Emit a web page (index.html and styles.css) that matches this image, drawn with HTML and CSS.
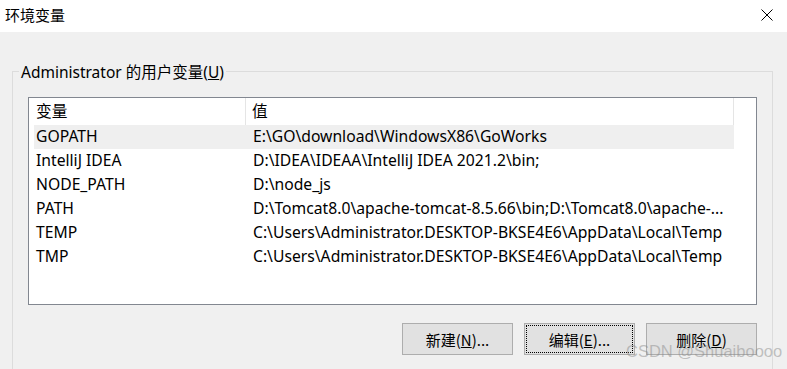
FILE: index.html
```html
<!DOCTYPE html>
<html lang="zh-CN">
<head>
  <meta charset="UTF-8" />
  <meta name="viewport" content="width=device-width, initial-scale=1" />
  <title>环境变量</title>
  <link rel="stylesheet" href="styles.css">
</head>
<body>
  <div class="dialog">
    <div class="titlebar">
      <span class="title">环境变量</span>
      <span class="close" aria-label="关闭">
        <svg width="12" height="12" viewBox="0 0 12 12"><path d="M0.5 0.5L11.5 11.5M11.5 0.5L0.5 11.5" stroke="#000" stroke-width="1" fill="none"/></svg>
      </span>
    </div>

    <div class="content">
      <fieldset class="group">
        <legend>Administrator 的用户变量(<u>U</u>)</legend>

        <div class="listbox">
          <div class="list-head">
            <div class="col-name">变量</div>
            <div class="col-value">值</div>
          </div>
          <div class="row selected">
            <div class="col-name">GOPATH</div>
            <div class="col-value">E:\GO\download\WindowsX86\GoWorks</div>
          </div>
          <div class="row">
            <div class="col-name">IntelliJ IDEA</div>
            <div class="col-value">D:\IDEA\IDEAA\IntelliJ IDEA 2021.2\bin;</div>
          </div>
          <div class="row">
            <div class="col-name">NODE_PATH</div>
            <div class="col-value">D:\node_js</div>
          </div>
          <div class="row">
            <div class="col-name">PATH</div>
            <div class="col-value">D:\Tomcat8.0\apache-tomcat-8.5.66\bin;D:\Tomcat8.0\apache-...</div>
          </div>
          <div class="row">
            <div class="col-name">TEMP</div>
            <div class="col-value">C:\Users\Administrator.DESKTOP-BKSE4E6\AppData\Local\Temp</div>
          </div>
          <div class="row">
            <div class="col-name">TMP</div>
            <div class="col-value">C:\Users\Administrator.DESKTOP-BKSE4E6\AppData\Local\Temp</div>
          </div>
        </div>

        <div class="buttons">
          <button>新建(<u>N</u>)...</button>
          <button class="focused">编辑(<u>E</u>)...</button>
          <button>删除(<u>D</u>)</button>
        </div>
      </fieldset>
    </div>

    <div class="watermark">CSDN @Shuaiboooo</div>
  </div>
</body>
</html>
```

FILE: styles.css
```css
* {
  box-sizing: border-box;
  margin: 0;
  padding: 0;
}
body {
  font-family: "Noto Sans", "Noto Sans CJK SC", sans-serif;
  font-size: 15.7px;
  color: #000;
  background: #f0f0f0;
  width: 787px;
  height: 369px;
  overflow: hidden;
}
.dialog {
  position: relative;
  height: 369px;
}
.titlebar {
  height: 32px;
  background: #fff;
  display: flex;
  align-items: center;
  justify-content: space-between;
  padding: 0 14px 0 5px;
}
.title {
  font-family: "Noto Sans CJK SC", sans-serif;
  font-size: 15px;
  margin-top: -3px;
}
.close {
  display: flex;
  margin-top: -3px;
}
.content {
  background: #f0f0f0;
  padding: 28px 14px 0 12px;
}
.group {
  border: 1px solid #dcdcdc;
  padding: 14px 15px 0 15px;
  height: 320px;
}
.group legend {
  margin-left: -9px;
  padding: 0 2px;
  font-size: 15.5px;
}
.listbox {
  height: 208px;
  border: 1px solid #828790;
  background: #fff;
  padding-right: 22px;
}
.list-head {
  display: flex;
  height: 27px;
  align-items: center;
  border-right: 1px solid #e5e5e5;
}
.list-head .col-name {
  width: 217px;
  padding-left: 7px;
  padding-bottom: 3px;
  border-right: 1px solid #e5e5e5;
  height: 100%;
  display: flex;
  align-items: center;
}
.list-head .col-value {
  padding-left: 6px;
  padding-bottom: 3px;
}
.row {
  display: flex;
  height: 24px;
  align-items: center;
  margin-left: 5px;
  padding-bottom: 2px;
  white-space: nowrap;
}
.row.selected {
  background: #efefef;
}
.row .col-name {
  width: 212px;
  padding-left: 2px;
}
.row .col-value {
  padding-left: 7px;
}
.buttons {
  display: flex;
  justify-content: flex-end;
  gap: 11px;
  margin-top: 18px;
}
.buttons button {
  width: 111px;
  height: 32px;
  background: #e1e1e1;
  border: 1px solid #adadad;
  font-family: "Noto Sans CJK SC", sans-serif;
  font-size: 15px;
  color: #000;
}
.buttons button.focused {
  outline: 1px dotted #000;
  outline-offset: -3px;
}
.watermark {
  position: absolute;
  left: 626px;
  top: 342px;
  font-family: "Liberation Sans", sans-serif;
  font-size: 16.5px;
  color: rgba(140, 140, 140, 0.5);
}
```
